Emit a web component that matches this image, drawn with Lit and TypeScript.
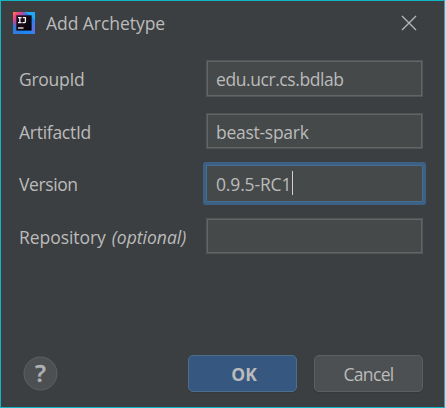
import { LitElement, html, svg, css } from "lit";
import { customElement, state } from "lit/decorators.js";

interface Field {
  id: string;
  label: string;
  hint?: string;
  value: string;
}

@customElement("app-root")
export class AddArchetypeDialog extends LitElement {
  static styles = css`
    :host {
      display: flex;
      flex-direction: column;
      box-sizing: border-box;
      width: 445px;
      height: 408px;
      border: 1px solid #12b5c6;
      background: #3c3f41;
      color: #bbbbbb;
      font: 17.5px/24px "Open Sans", "Noto Sans", sans-serif;
      white-space: nowrap;
      overflow: hidden;
    }
    .title-bar {
      display: flex;
      align-items: center;
      height: 44px;
      padding: 0 27px 0 12px;
      flex: none;
    }
    .logo { display: block; margin-right: 11px; }
    .title { flex: 1; letter-spacing: -0.05px; }
    .close { display: block; }
    .form {
      display: grid;
      grid-template-columns: 187px 217px;
      grid-template-rows: repeat(4, 36.5px);
      row-gap: 16px;
      padding: 15px 0 0 18px;
    }
    .label { line-height: 37px; padding-top: 1px; }
    .field {
      display: flex;
      align-items: center;
      box-sizing: border-box;
      height: 36.5px;
      padding: 2px 0 0 9px;
      border: 1px solid #525455;
      box-shadow: inset 0 0 0 1px #646464;
      background: #45494a;
    }
    .focused {
      border: 1px solid #466d94;
      box-shadow: 0 0 0 3px #3d6185;
      border-radius: 1px;
    }
    .caret { width: 1px; height: 24px; background: #d0d0d0; margin: -3px 0 0 1px; }
    .GroupId { letter-spacing: -0.28px; }
    .ArtifactId { letter-spacing: -0.27px; }
    .Version { letter-spacing: -0.4px; }
    .Repository { letter-spacing: -0.05px; }
    .value-GroupId { letter-spacing: -0.42px; }
    .value-ArtifactId { letter-spacing: -0.27px; }
    .value-Version { letter-spacing: -0.15px; }
    .hint { font-style: italic; margin-left: 6px; }
    .footer {
      display: flex;
      align-items: center;
      margin-top: auto;
      padding: 0 21px 15px 22px;
    }
    .help { display: block; margin-right: auto; }
    .button {
      display: flex;
      align-items: center;
      justify-content: center;
      box-sizing: border-box;
      width: 109px;
      height: 37px;
      padding-top: 1px;
      border: 1px solid #5e6060;
      border-radius: 5px;
      background: #4c5052;
      box-shadow: 0 1px 1px #36393b;
      letter-spacing: -0.65px;
    }
    .primary {
      margin-right: 17px;
      padding-left: 3px;
      border-color: #4c708c;
      background: #365880;
      font-weight: 700;
      letter-spacing: 0;
    }
    .question { font: 600 24px "Open Sans", sans-serif; fill: #afb1b3; }
  `;

  @state() private focusedId = "Version";

  private fields: Field[] = [
    { id: "GroupId", label: "GroupId", value: "edu.ucr.cs.bdlab" },
    { id: "ArtifactId", label: "ArtifactId", value: "beast-spark" },
    { id: "Version", label: "Version", value: "0.9.5-RC1" },
    { id: "Repository", label: "Repository", hint: "(optional)", value: "" },
  ];

  private logo() {
    return svg`<svg class="logo" width="22" height="22" viewBox="0 0 22 22">
      <defs>
        <linearGradient id="frame" x1="0" y1="0" x2="1" y2="0.8">
          <stop offset="0" stop-color="#f98b3c" />
          <stop offset=".14" stop-color="#f5487c" />
          <stop offset=".3" stop-color="#a64da8" />
          <stop offset=".48" stop-color="#1979ee" />
          <stop offset=".75" stop-color="#1689f8" />
          <stop offset="1" stop-color="#2f83f1" />
        </linearGradient>
        <linearGradient id="screen" x1="0" y1="0" x2="1" y2="1">
          <stop offset="0" stop-color="#24101f" />
          <stop offset="1" stop-color="#050006" />
        </linearGradient>
      </defs>
      <path d="M0 0H22V22H0Z" fill="url(#frame)" />
      <path d="M11 0H22V9L18 4Z" fill="#20a9f4" />
      <path d="M22 7V22L17 18Z" fill="#5374e8" />
      <path d="M0 10L4 18L12 22H0Z" fill="#317ddd" />
      <path d="M3.3 3.3H18.6V18.6H3.3Z" fill="url(#screen)" />
      <path d="M5 5.6H8.6M6.8 5.6V10.6M5 10.6H8.6M9.8 5.6H12.4V9.4Q12.4 10.7 11.2 10.7H9.4"
        fill="none" stroke="#f4f2f4" stroke-width="1.3" />
      <path d="M5 15.2H10.5V16.8H5Z" fill="#c9c5c9" />
    </svg>`;
  }

  private row(f: Field) {
    const focused = f.id === this.focusedId;
    return html`
      <div class="label">
        <span class=${f.id}>${f.label}</span>${f.hint
          ? html`<span class="hint">${f.hint}</span>`
          : null}
      </div>
      <div class="field ${focused ? "focused" : ""}" @click=${() => (this.focusedId = f.id)}>
        <span class="value-${f.id}">${f.value}</span>${focused ? html`<span class="caret"></span>` : null}
      </div>
    `;
  }

  render() {
    return html`
      <div class="title-bar">
        ${this.logo()}
        <span class="title">Add Archetype</span>
        <svg class="close" width="16" height="16" viewBox="0 0 16 16">
          <path d="M1 1L15 15M15 1L1 15" stroke="#b4b5b6" stroke-width="1.4" />
        </svg>
      </div>
      <div class="form">${this.fields.map((f) => this.row(f))}</div>
      <div class="footer">
        <svg class="help" width="35" height="35" viewBox="0 0 35 35">
          <circle cx="17.5" cy="17.5" r="16.5" fill="#4c5052" stroke="#5e6060" />
          <text class="question" x="17.5" y="26" text-anchor="middle" stroke="#afb1b3" stroke-width=".4">?</text>
        </svg>
        <div class="button primary">OK</div>
        <div class="button">Cancel</div>
      </div>
    `;
  }
}
